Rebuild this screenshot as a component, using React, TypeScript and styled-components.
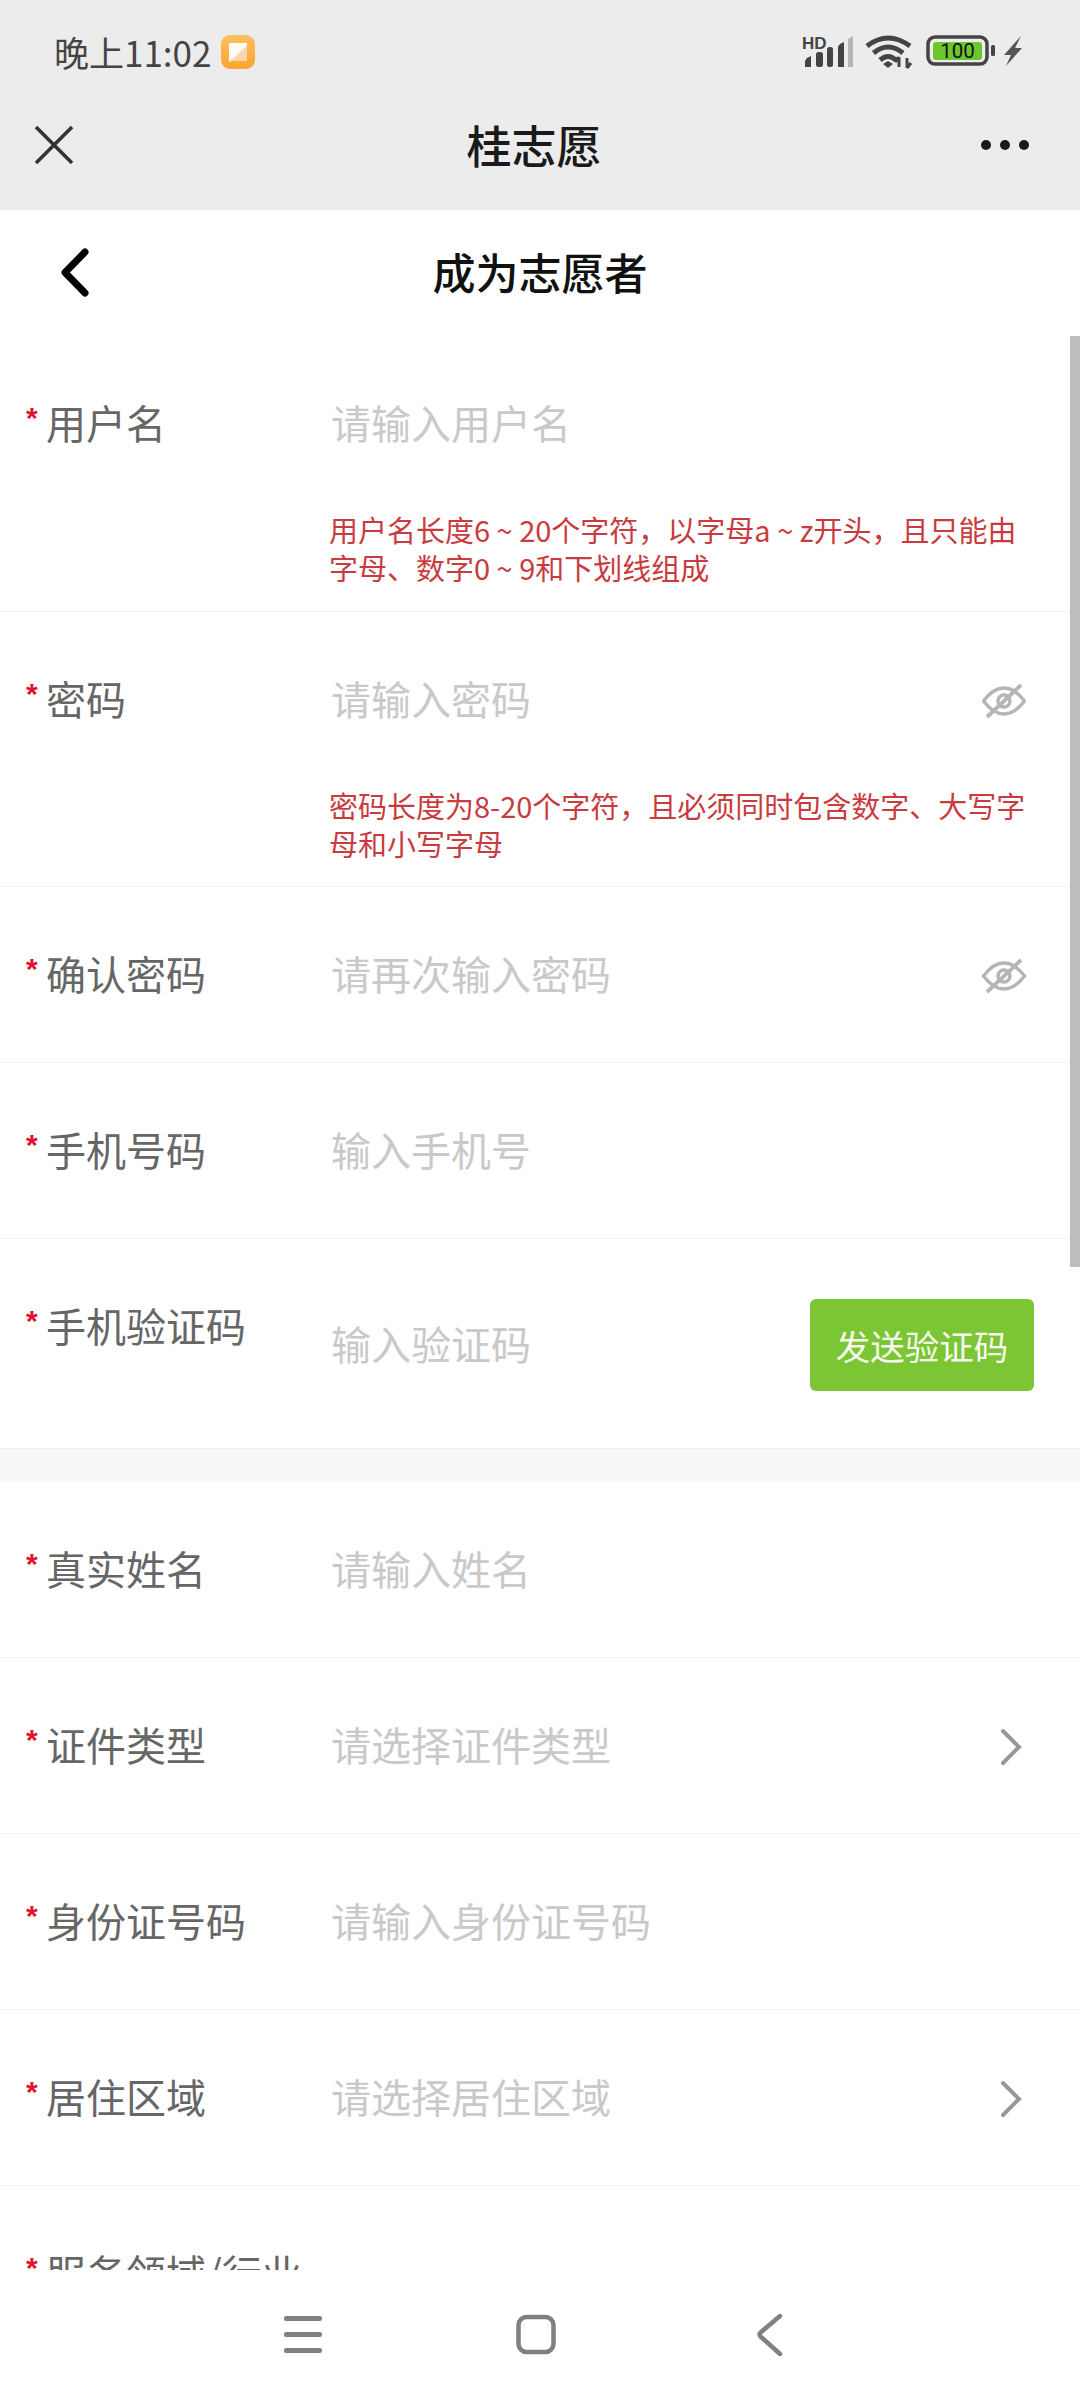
import React, { ReactNode } from "react";
import styled, { createGlobalStyle } from "styled-components";

const GlobalStyle = createGlobalStyle`
  html, body {
    margin: 0;
    padding: 0;
    background: #fff;
    font-family: "Noto Sans CJK SC", "Noto Sans", sans-serif;
  }
`;

const Screen = styled.div`
  width: 1080px;
  height: 2400px;
  display: flex;
  flex-direction: column;
  overflow: hidden;
  background: #fff;
`;

const TopChrome = styled.div`
  background: #ececec;
  height: 210px;
  flex: none;
  display: flex;
  flex-direction: column;
`;

const StatusBar = styled.div`
  height: 105px;
  padding: 0 56px 2px 54px;
  display: flex;
  align-items: center;
  justify-content: space-between;
  box-sizing: border-box;
`;

const StatusLeft = styled.div`
  display: flex;
  align-items: center;
  gap: 10px;
`;

const Time = styled.span`
  font-size: 35px;
  line-height: 44px;
  color: #444;
`;

const StatusIcons = styled.div`
  display: flex;
  align-items: center;
`;

const WebNav = styled.div`
  height: 105px;
  padding: 0 51px 25px 32px;
  display: flex;
  align-items: center;
  justify-content: space-between;
  box-sizing: border-box;
  position: relative;
`;

const WebTitle = styled.div`
  position: absolute;
  left: 0;
  right: 12px;
  top: 9px;
  text-align: center;
  font-size: 45px;
  line-height: 62px;
  font-weight: 500;
  color: #1a1a1a;
`;

const PageHeader = styled.div`
  height: 126px;
  flex: none;
  position: relative;
  display: flex;
  align-items: center;
  padding: 0 0 0 60px;
  box-sizing: border-box;
`;

const PageTitle = styled.div`
  position: absolute;
  left: 0;
  right: 0;
  top: 31px;
  text-align: center;
  font-size: 43px;
  line-height: 60px;
  font-weight: 500;
  color: #111;
`;

const ScrollArea = styled.div`
  height: 1934px;
  flex: none;
  overflow: hidden;
  position: relative;
`;

const ScrollThumb = styled.div`
  position: absolute;
  top: 0;
  right: 0;
  width: 10px;
  height: 931px;
  background: #bdbdbd;
`;

const Section = styled.div`
  display: flex;
  flex-direction: column;
`;

const SectionGap = styled.div`
  height: 33px;
  background: #f7f7f7;
  border-top: 1px solid #efefef;
`;

const Row = styled.div<{ $last?: boolean }>`
  padding: 60px 54px 0 26px;
  box-sizing: border-box;
  border-bottom: ${(p) => (p.$last ? "none" : "1px solid #f0f0f0")};
`;

const Line = styled.div<{ $tall?: boolean }>`
  display: flex;
  align-items: ${(p) => (p.$tall ? "flex-start" : "center")};
  min-height: 58px;
  padding-bottom: 57px;
`;

const Label = styled.div`
  width: 305px;
  flex: none;
  display: flex;
  align-items: center;
  font-size: 40px;
  line-height: 52px;
  padding-bottom: 6px;
  color: #666;
`;

const Star = styled.span`
  width: 20px;
  flex: none;
  font-family: "Liberation Sans", sans-serif;
  font-size: 30px;
  font-weight: 700;
  line-height: 30px;
  color: #e0102f;
  margin-top: -8px;
`;

const Placeholder = styled.div<{ $tall?: boolean }>`
  flex: 1;
  font-size: 40px;
  line-height: 52px;
  padding-bottom: 6px;
  color: #c9c9c9;
  margin-top: ${(p) => (p.$tall ? "18px" : "0")};
`;

const Hint = styled.div`
  margin: -1px 0 0 303px;
  padding-bottom: 24.5px;
  font-size: 29px;
  line-height: 38px;
  color: #c93b3f;
  width: 700px;
`;

const SendButton = styled.div`
  width: 224px;
  height: 92px;
  flex: none;
  display: flex;
  align-items: center;
  justify-content: center;
  background: #7cc635;
  border-radius: 6px;
  color: #f7fbef;
  font-size: 34.5px;
  line-height: 92px;
  margin-right: -8px;
`;

const BottomNav = styled.div`
  height: 130px;
  flex: none;
  display: flex;
  align-items: center;
  background: #fff;
`;

const NavSlot = styled.div<{ $w: number; $ml: number }>`
  width: ${(p) => p.$w}px;
  margin-left: ${(p) => p.$ml}px;
  display: flex;
`;

const Close = () => (
  <svg width="44" height="44" viewBox="0 0 44 44" fill="none" stroke="#333" strokeWidth="3.6">
    <path d="M4 4L40 40M40 4L4 40" />
  </svg>
);

const Dots = () => (
  <svg width="48" height="12" viewBox="0 0 48 12" fill="#1a1a1a">
    <circle cx="5" cy="6" r="5" />
    <circle cx="24" cy="6" r="5" />
    <circle cx="43" cy="6" r="5" />
  </svg>
);

const Back = () => (
  <svg width="32" height="50" viewBox="0 0 32 50" fill="none" stroke="#000" strokeWidth="7" strokeLinecap="round" strokeLinejoin="round">
    <path d="M25 4L5 24.500L25 45" />
  </svg>
);

const AppBadge = () => (
  <svg width="34" height="34" viewBox="0 0 34 34">
    <defs>
      <linearGradient id="badge" x1="0" y1="0" x2="0" y2="1">
        <stop offset="0" stopColor="#fbc15c" />
        <stop offset="1" stopColor="#fda42e" />
      </linearGradient>
    </defs>
    <rect width="34" height="34" rx="9" fill="url(#badge)" />
    <path d="M8 8H26V20L8 27Z" fill="#fff" opacity="0.95" />
    <path d="M26 11V26H9Z" fill="#fbd5ac" />
  </svg>
);

const Signal = () => (
  <svg width="52" height="34" viewBox="0 0 52 34" style={{ marginRight: 11 }}>
    <text x="0" y="14" fontSize="17" fontWeight="700" fill="#444" fontFamily="Liberation Sans, sans-serif">
      HD
    </text>
    <path d="M3 32V27Q3 23 9 21V32Z" fill="#444" />
    <rect x="14" y="17" width="7" height="15" rx="2.500" fill="#444" />
    <rect x="25" y="12" width="6" height="20" rx="2.500" fill="#444" />
    <path d="M36 12Q36 9.500 42 7V32H36Z" fill="#444" />
    <path d="M46 4L51 1V32H46Z" fill="#b5b5b5" />
  </svg>
);

const Wifi = () => (
  <svg width="48" height="34" viewBox="0 0 48 34" fill="none" stroke="#444" strokeWidth="5" style={{ marginRight: 13 }}>
    <path d="M2 11Q23 -5 45 11" />
    <path d="M8.500 18Q23 6 38 18" />
    <path d="M15 25Q23 18 31 25" />
    <path d="M18 29L23 26L28 29L23 33Z" fill="#444" stroke="none" />
    <path d="M34 22V32M30 27L34 22M42 33V23M42 33L46 28" strokeWidth="3" />
  </svg>
);

const Battery = () => (
  <svg width="98" height="34" viewBox="0 0 98 34">
    <rect x="2" y="2" width="59" height="27" rx="7" fill="none" stroke="#444" strokeWidth="3.500" />
    <rect x="7" y="7" width="49" height="18" rx="3" fill="#6cc62e" />
    <text x="31.500" y="23" textAnchor="middle" fontSize="20.500" fill="#111" fontFamily="Roboto, sans-serif">
      100
    </text>
    <rect x="65" y="10" width="4" height="11" rx="1.500" fill="#444" />
    <path d="M95 1L78 20H85L80 31L96 13H89Z" fill="#555" />
  </svg>
);

const EyeOff = () => (
  <svg width="44" height="36" viewBox="0 0 44 36" fill="none" stroke="#b5b5b5" strokeWidth="3.400">
    <path d="M1.500 18C9 8 16 5 22 5S35 8 42.500 18C35 28 28 31 22 31S9 28 1.500 18Z" />
    <circle cx="22" cy="18" r="6" />
    <path d="M5 34L39 2" strokeWidth="3.800" />
  </svg>
);

const Chevron = () => (
  <svg width="27" height="38" viewBox="0 0 27 38" fill="none" stroke="#989898" strokeWidth="4" strokeLinecap="round">
    <path d="M4 3L20 19L4 35" />
  </svg>
);

const MenuGlyph = () => (
  <svg width="40" height="40" viewBox="0 0 40 40" fill="#808080">
    <rect x="0" y="1" width="38" height="5" rx="2" />
    <rect x="0" y="17" width="38" height="5" rx="2" />
    <rect x="0" y="33" width="38" height="5" rx="2" />
  </svg>
);

const HomeGlyph = () => (
  <svg width="42" height="42" viewBox="0 0 42 42" fill="none" stroke="#808080" strokeWidth="4.500">
    <rect x="2.500" y="3" width="35" height="35" rx="8" />
  </svg>
);

const BackGlyph = () => (
  <svg width="28" height="42" viewBox="0 0 28 42" fill="none" stroke="#808080" strokeWidth="4.500" strokeLinecap="round" strokeLinejoin="round">
    <path d="M23 2L3.500 18.500Q1.500 20.500 3.500 22.500L23 40" />
  </svg>
);

type FieldProps = {
  label: string;
  placeholder: string;
  hint?: ReactNode;
  trailing?: ReactNode;
  last?: boolean;
};

const Field = ({ label, placeholder, hint, trailing, last }: FieldProps) => (
  <Row $last={last}>
    <Line>
      <Label>
        <Star>*</Star>
        {label}
      </Label>
      <Placeholder>{placeholder}</Placeholder>
      {trailing}
    </Line>
    {hint && <Hint>{hint}</Hint>}
  </Row>
);

export default function App() {
  return (
    <Screen>
      <GlobalStyle />
      <TopChrome>
        <StatusBar>
          <StatusLeft>
            <Time>晚上11:02</Time>
            <AppBadge />
          </StatusLeft>
          <StatusIcons>
            <Signal />
            <Wifi />
            <Battery />
          </StatusIcons>
        </StatusBar>
        <WebNav>
          <Close />
          <WebTitle>桂志愿</WebTitle>
          <Dots />
        </WebNav>
      </TopChrome>
      <PageHeader>
        <Back />
        <PageTitle>成为志愿者</PageTitle>
      </PageHeader>
      <ScrollArea>
        <ScrollThumb />
        <Section>
          <Field
            label="用户名"
            placeholder="请输入用户名"
            hint="用户名长度6 ~ 20个字符，以字母a ~ z开头，且只能由字母、数字0 ~ 9和下划线组成"
          />
          <Field
            label="密码"
            placeholder="请输入密码"
            trailing={<EyeOff />}
            hint="密码长度为8-20个字符，且必须同时包含数字、大写字母和小写字母"
          />
          <Field label="确认密码" placeholder="请再次输入密码" trailing={<EyeOff />} />
          <Field label="手机号码" placeholder="输入手机号" />
          <Row $last>
            <Line $tall>
              <Label>
                <Star>*</Star>
                手机验证码
              </Label>
              <Placeholder $tall>输入验证码</Placeholder>
              <SendButton>发送验证码</SendButton>
            </Line>
          </Row>
        </Section>
        <SectionGap />
        <Section>
          <Field label="真实姓名" placeholder="请输入姓名" />
          <Field label="证件类型" placeholder="请选择证件类型" trailing={<Chevron />} />
          <Field label="身份证号码" placeholder="请输入身份证号码" />
          <Field label="居住区域" placeholder="请选择居住区域" trailing={<Chevron />} />
          <Field label="服务领域/行业" placeholder="" last />
        </Section>
      </ScrollArea>
      <BottomNav>
        <NavSlot $w={40} $ml={284}>
          <MenuGlyph />
        </NavSlot>
        <NavSlot $w={42} $ml={192}>
          <HomeGlyph />
        </NavSlot>
        <NavSlot $w={28} $ml={199}>
          <BackGlyph />
        </NavSlot>
      </BottomNav>
    </Screen>
  );
}
